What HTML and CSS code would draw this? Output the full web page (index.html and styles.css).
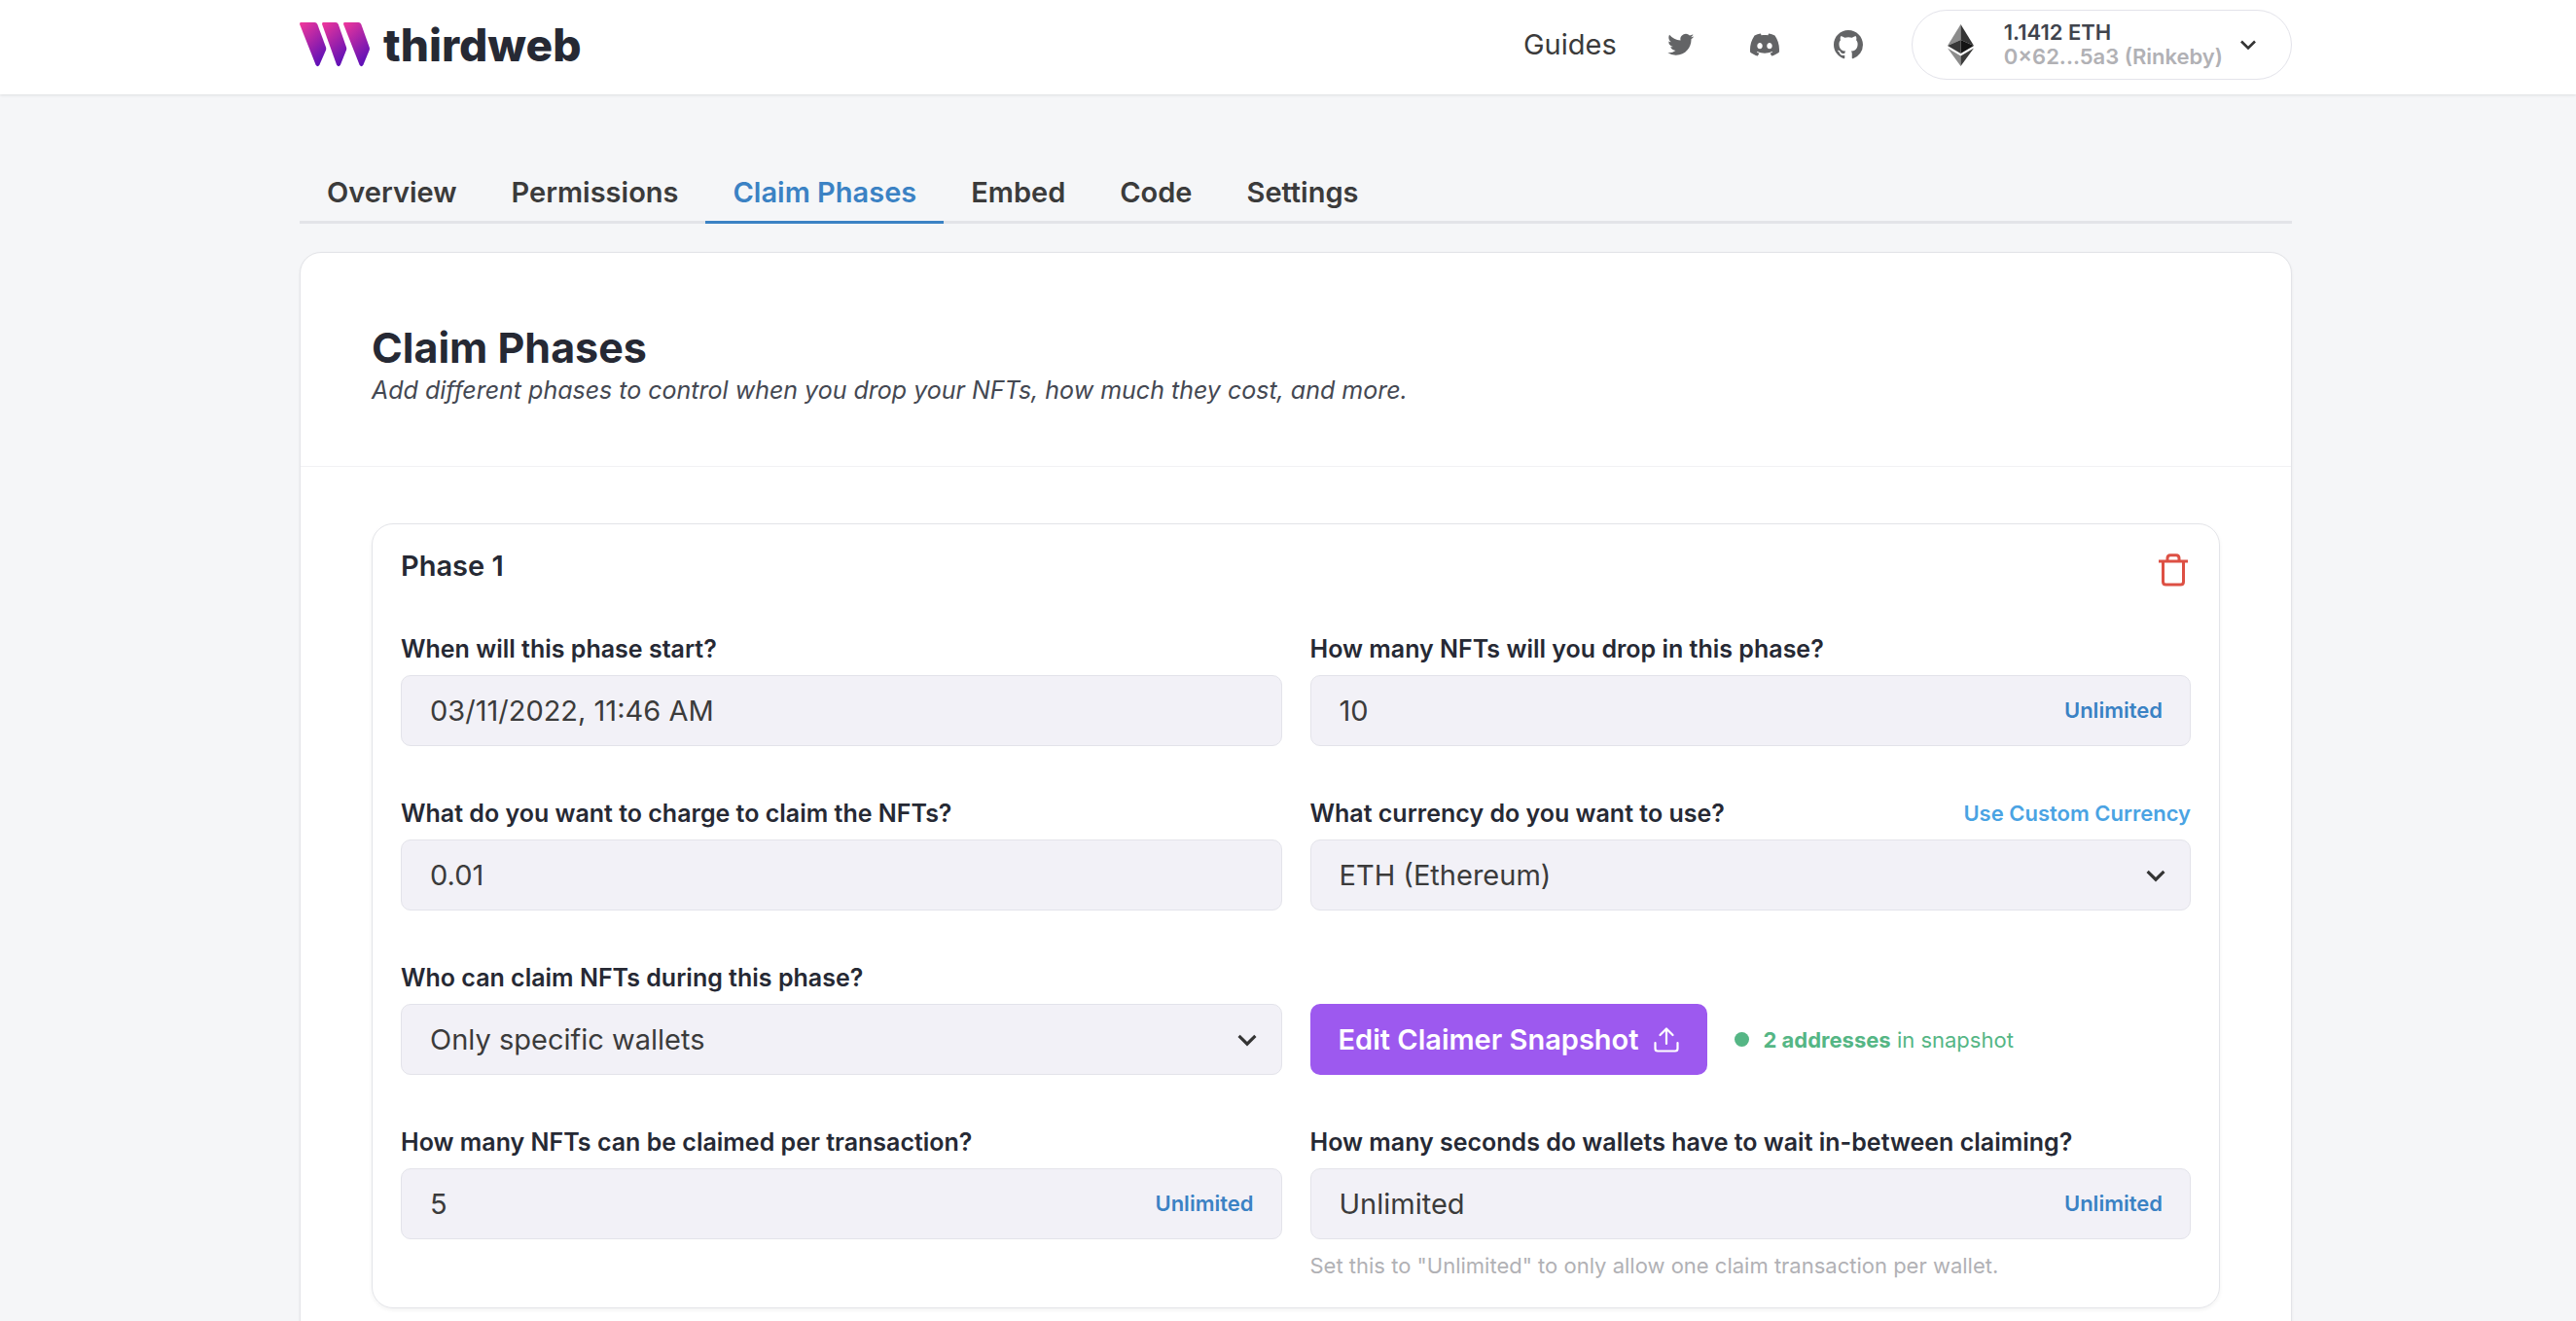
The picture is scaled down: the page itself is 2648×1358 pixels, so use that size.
FILE: index.html
```html
<!DOCTYPE html>
<html lang="en">
<head>
<meta charset="utf-8">
<meta name="viewport" content="width=device-width, initial-scale=1">
<title>thirdweb – Claim Phases</title>
<link rel="stylesheet" href="styles.css">
</head>
<body>
<svg class="sprite" aria-hidden="true">
  <symbol id="chevron" viewBox="0 0 20 20"><path d="M3 6.500 10 13.500 17 6.500" fill="none" stroke="currentColor" stroke-width="2.600"/></symbol>
</svg>

<header class="topbar">
  <a class="brand" href="#">
    <svg class="brand-mark" viewBox="0 0 72 46" aria-hidden="true">
      <defs>
        <linearGradient id="g1" gradientUnits="userSpaceOnUse" x1="2" y1="2" x2="32" y2="34"><stop offset="0" stop-color="#ea359c"/><stop offset="1" stop-color="#5a0fb8"/></linearGradient>
        <linearGradient id="g2" gradientUnits="userSpaceOnUse" x1="24" y1="2" x2="54" y2="34"><stop offset="0" stop-color="#ea359c"/><stop offset="1" stop-color="#5a0fb8"/></linearGradient>
        <linearGradient id="g3" gradientUnits="userSpaceOnUse" x1="46" y1="2" x2="76" y2="34"><stop offset="0" stop-color="#ea359c"/><stop offset="1" stop-color="#5a0fb8"/></linearGradient>
      </defs>
      <path fill="url(#g1)" d="M1.500 0H15.500Q17.500 0 18.300 2L27 25.500Q27.500 27 27 28.500L20.500 43.500Q18.500 47 16.500 43.500L.3 2.500Q-.5 0 1.500 0Z"/>
      <path fill="url(#g2)" d="M24.500 0H37Q39 0 39.800 2L48 25.500Q48.500 27 48 28.500L42 43.500Q40 47 38 43.500L23.300 2.500Q22.500 0 24.500 0Z"/>
      <path fill="url(#g3)" d="M46.500 0H60.500Q62.500 0 63.300 2L71.700 25.500Q72.200 27 71.700 28.500L65.500 43.500Q63.500 47 61.500 43.500L45.300 2.500Q44.500 0 46.500 0Z"/>
    </svg>
    <span class="brand-name">thirdweb</span>
  </a>
  <nav class="topnav">
    <a class="guides" href="#">Guides</a>
    <a class="social" href="#" aria-label="Twitter"><svg viewBox="0 0 24 24"><path transform="translate(1 1) scale(.9)" d="M23.953 4.570a10 10 0 01-2.825.775 4.958 4.958 0 002.163-2.723c-.951.555-2.005.959-3.127 1.184a4.920 4.920 0 00-8.384 4.482C7.690 8.095 4.067 6.130 1.640 3.162a4.822 4.822 0 00-.666 2.475c0 1.710.870 3.213 2.188 4.096a4.904 4.904 0 01-2.228-.616v.060a4.923 4.923 0 003.946 4.827 4.996 4.996 0 01-2.212.085 4.936 4.936 0 004.604 3.417 9.867 9.867 0 01-6.102 2.105c-.390 0-.779-.023-1.170-.067a13.995 13.995 0 007.557 2.209c9.053 0 13.998-7.496 13.998-13.985 0-.210 0-.420-.015-.630A9.935 9.935 0 0024 4.590z"/></svg></a>
    <a class="social" href="#" aria-label="Discord"><svg viewBox="0 0 24 24"><path d="M20.317 4.3698a19.7913 19.7913 0 00-4.8851-1.5152.0741.0741 0 00-.0785.0371c-.211.3753-.4447.8648-.6083 1.2495-1.8447-.2762-3.68-.2762-5.4868 0-.1636-.3933-.4058-.8742-.6177-1.2495a.077.077 0 00-.0785-.037 19.7363 19.7363 0 00-4.8852 1.515.0699.0699 0 00-.0321.0277C.5334 9.0458-.319 13.5799.0992 18.0578a.0824.0824 0 00.0312.0561c2.0528 1.5076 4.0413 2.4228 5.9929 3.0294a.0777.0777 0 00.0842-.0276c.4616-.6304.8731-1.2952 1.226-1.9942a.076.076 0 00-.0416-.1057c-.6528-.2476-1.2743-.5495-1.8722-.8923a.077.077 0 01-.0076-.1277c.1258-.0943.2517-.1923.3718-.2914a.0743.0743 0 01.0776-.0105c3.9278 1.7933 8.18 1.7933 12.0614 0a.0739.0739 0 01.0785.0095c.1202.099.246.1981.3728.2924a.077.077 0 01-.0066.1276 12.2986 12.2986 0 01-1.873.8914.0766.0766 0 00-.0407.1067c.3604.698.7719 1.3628 1.225 1.9932a.076.076 0 00.0842.0286c1.961-.6067 3.9495-1.5219 6.0023-3.0294a.077.077 0 00.0313-.0552c.5004-5.177-.8382-9.6739-3.5485-13.6604a.061.061 0 00-.0312-.0286zM8.02 15.3312c-1.1825 0-2.1569-1.0857-2.1569-2.419 0-1.3332.9555-2.4189 2.157-2.4189 1.2108 0 2.1757 1.0952 2.1568 2.419 0 1.3332-.9555 2.4189-2.1569 2.4189zm7.9748 0c-1.1825 0-2.1569-1.0857-2.1569-2.419 0-1.3332.9554-2.4189 2.1569-2.4189 1.2108 0 2.1757 1.0952 2.1568 2.419 0 1.3332-.946 2.4189-2.1568 2.4189Z"/></svg></a>
    <a class="social" href="#" aria-label="GitHub"><svg viewBox="0 0 16 16"><path d="M8 0C3.58 0 0 3.58 0 8c0 3.54 2.29 6.53 5.47 7.59.4.07.55-.17.55-.38 0-.19-.01-.82-.01-1.49-2.01.37-2.53-.49-2.69-.94-.09-.23-.48-.94-.82-1.13-.28-.15-.68-.52-.01-.53.63-.01 1.08.58 1.23.82.72 1.21 1.87.87 2.33.66.07-.52.28-.87.51-1.07-1.78-.2-3.64-.89-3.64-3.95 0-.87.31-1.59.82-2.15-.08-.2-.36-1.02.08-2.12 0 0 .67-.21 2.2.82.64-.18 1.32-.27 2-.27.68 0 1.36.09 2 .27 1.53-1.04 2.2-.82 2.2-.82.44 1.1.16 1.92.08 2.12.51.56.82 1.27.82 2.15 0 3.07-1.87 3.75-3.65 3.95.29.25.54.73.54 1.48 0 1.07-.01 1.93-.01 2.2 0 .21.15.46.55.38A8.013 8.013 0 0016 8c0-4.42-3.58-8-8-8z"/></svg></a>
    <button class="wallet" type="button">
      <svg class="eth" viewBox="0 0 27 43" aria-hidden="true">
        <path fill="#8c8c8c" d="M13.500 0 0 22 13.500 16Z"/><path fill="#343434" d="M13.500 0 27 22 13.500 16Z"/>
        <path fill="#393939" d="M13.500 16 0 22 13.500 30Z"/><path fill="#141414" d="M13.500 16 27 22 13.500 30Z"/>
        <path fill="#8c8c8c" d="M0 24.500 13.500 32.500V43Z"/><path fill="#3c3c3b" d="M27 24.500 13.500 32.500V43Z"/>
      </svg>
      <span class="wallet-text"><span class="balance">1.1412 ETH</span><span class="address">0×62...5a3 (Rinkeby)</span></span>
      <svg class="chevron" aria-hidden="true"><use href="#chevron"/></svg>
    </button>
  </nav>
</header>

<main class="page">
  <nav class="tabs">
    <a class="tab" href="#">Overview</a>
    <a class="tab" href="#">Permissions</a>
    <a class="tab tab-active" href="#" aria-current="page">Claim Phases</a>
    <a class="tab" href="#">Embed</a>
    <a class="tab" href="#">Code</a>
    <a class="tab" href="#">Settings</a>
  </nav>

  <section class="card">
    <div class="card-head">
      <h1>Claim Phases</h1>
      <p>Add different phases to control when you drop your NFTs, how much they cost, and more.</p>
    </div>
    <div class="card-body">
      <form class="phase">
        <div class="phase-head">
          <h2>Phase 1</h2>
          <button class="delete" type="button" aria-label="Delete phase">
            <svg viewBox="0 0 30 34" fill="none" stroke="currentColor" stroke-width="3" aria-hidden="true"><path d="M0 8H30M4.500 8V29Q4.500 32 7.500 32H22.500Q25.500 32 25.500 29V8M9 8V5Q9 1.700 12 1.700H18Q21 1.700 21 5V8"/></svg>
          </button>
        </div>
        <div class="fields">
          <div class="field">
            <div class="label-row"><label for="start">When will this phase start?</label></div>
            <div class="control"><input id="start" type="text" value="03/11/2022, 11:46 AM"></div>
          </div>
          <div class="field">
            <div class="label-row"><label for="supply">How many NFTs will you drop in this phase?</label></div>
            <div class="control"><input id="supply" type="text" value="10"><button class="unlimited" type="button">Unlimited</button></div>
          </div>
          <div class="field">
            <div class="label-row"><label for="price">What do you want to charge to claim the NFTs?</label></div>
            <div class="control"><input id="price" type="text" value="0.01"></div>
          </div>
          <div class="field">
            <div class="label-row"><label for="currency">What currency do you want to use?</label><button class="custom" type="button">Use Custom Currency</button></div>
            <div class="control"><select id="currency"><option>ETH (Ethereum)</option></select><svg class="chevron select-chevron" aria-hidden="true"><use href="#chevron"/></svg></div>
          </div>
          <div class="field">
            <div class="label-row"><label for="who">Who can claim NFTs during this phase?</label></div>
            <div class="control"><select id="who"><option>Only specific wallets</option></select><svg class="chevron select-chevron" aria-hidden="true"><use href="#chevron"/></svg></div>
          </div>
          <div class="snapshot">
            <button class="edit" type="button">Edit Claimer Snapshot
              <svg viewBox="0 0 26 26" fill="none" stroke="currentColor" stroke-width="2.200" stroke-linecap="round" stroke-linejoin="round" aria-hidden="true"><path d="M13 17V2M6.500 8 13 1.500 19.500 8M1.500 16V22Q1.500 24.500 4 24.500H22Q24.500 24.500 24.500 22V16"/></svg>
            </button>
            <p class="count"><span class="dot"></span><span><strong>2 addresses</strong> in snapshot</span></p>
          </div>
          <div class="field">
            <div class="label-row"><label for="limit">How many NFTs can be claimed per transaction?</label></div>
            <div class="control"><input id="limit" type="text" value="5"><button class="unlimited" type="button">Unlimited</button></div>
          </div>
          <div class="field">
            <div class="label-row"><label for="wait">How many seconds do wallets have to wait in-between claiming?</label></div>
            <div class="control"><input id="wait" type="text" value="Unlimited"><button class="unlimited" type="button">Unlimited</button></div>
            <p class="help">Set this to "Unlimited" to only allow one claim transaction per wallet.</p>
          </div>
        </div>
      </form>
    </div>
  </section>
</main>
</body>
</html>
```
FILE: styles.css
```css
* { box-sizing: border-box; }

body {
  margin: 0;
  background: #f5f6f8;
  color: #262934;
  font-family: Inter, "Liberation Sans", sans-serif;
  font-size: 29px;
  line-height: 44px;
}

html { overflow-x: hidden; }
h1, h2, p { margin: 0; }
a { color: inherit; text-decoration: none; }
button, input, select { font: inherit; color: inherit; margin: 0; }
button { border: 0; padding: 0; background: none; cursor: pointer; }
svg { display: block; flex: none; }
.sprite { position: absolute; width: 0; height: 0; }
.chevron { width: 20px; height: 20px; color: #343434; }

/* Top bar */
.topbar {
  display: flex;
  align-items: center;
  justify-content: space-between;
  height: 97px;
  padding: 0 292px 5px 308px;
  background: #fff;
  box-shadow: 0 1px 3px rgba(0, 0, 0, .1);
}
.brand { display: flex; align-items: center; gap: 14px; }
.brand-mark { width: 72px; height: 46px; }
.brand-name { font-size: 46px; font-weight: 800; line-height: 56px; }
.topnav { display: flex; align-items: center; }
.guides { margin-right: 51px; color: #3b3b3b; }
.social { margin-right: 56px; color: #636466; }
.social svg { width: 30px; height: 30px; fill: currentColor; }
.wallet {
  display: flex;
  align-items: center;
  height: 72px;
  margin-left: -6px;
  padding: 0 34px 0 36px;
  border: 1px solid #e3e3ea;
  border-radius: 36px;
  font-size: 22px;
  font-weight: 600;
  line-height: 25px;
  text-align: left;
}
.eth { width: 27px; height: 43px; margin-right: 31px; }
.wallet-text { display: flex; flex-direction: column; margin-right: 16px; }
.balance { color: #40444d; }
.address { color: #b1b1b5; }

/* Tabs */
.page { padding: 71px 292px 0 308px; }
.tabs { display: flex; border-bottom: 3px solid #e3e4e8; }
.tab {
  height: 62px;
  margin-bottom: -3px;
  padding: 8px 28px 0;
  border-bottom: 3px solid transparent;
  color: #3b3b3b;
  font-weight: 600;
}
.tab-active { color: #3b82c4; border-color: #3b82c4; }

/* Card */
.card {
  margin-top: 29px;
  border: 1px solid #e3e4e8;
  border-radius: 22px;
  background: #fff;
  box-shadow: 0 1px 3px rgba(0, 0, 0, .06);
}
.card-head { padding: 71px 73px 60px; border-bottom: 1px solid #f1f1f4; }
.card-head h1 { font-size: 43px; font-weight: 700; line-height: 52px; }
.card-head p { color: #444852; font-size: 25px; font-style: italic; line-height: 36px; }
.card-body { padding: 58px 73px; }

.phase {
  padding: 21px 29px 27px;
  border: 1px solid #e3e4e8;
  border-radius: 22px;
  box-shadow: 0 2px 4px rgba(0, 0, 0, .05);
}
.phase-head { display: flex; align-items: center; justify-content: space-between; margin-bottom: 45px; }
.phase-head h2 { font-size: 29px; font-weight: 600; }
.delete { padding: 8px 3px 0; color: #dd5044; }
.delete svg { width: 30px; height: 34px; }

.fields { display: grid; grid-template-columns: 1fr 1fr; gap: 51px 29px; align-items: start; }
.label-row { display: flex; justify-content: space-between; align-items: center; margin-bottom: 9px; line-height: 36px; }
label { font-size: 25px; font-weight: 600; }
.custom { color: #4aa3e3; font-size: 22px; font-weight: 600; }
.control { position: relative; }
.control input, .control select {
  display: block;
  width: 100%;
  height: 73px;
  padding: 0 29px;
  border: 1px solid #e3e3ea;
  border-radius: 10px;
  background: #f2f1f7;
  color: #3b3b3b;
  appearance: none;
}
.unlimited {
  position: absolute;
  top: 14px;
  right: 29px;
  color: #3b82c4;
  font-size: 22px;
  font-weight: 600;
}
.select-chevron { position: absolute; top: 25px; right: 24px; width: 24px; height: 24px; pointer-events: none; }
.help { margin-top: 11px; color: #b1b1b5; font-size: 22px; line-height: 32px; }

.snapshot { display: flex; align-items: center; gap: 28px; align-self: end; }
.edit {
  display: flex;
  align-items: center;
  gap: 15px;
  height: 73px;
  padding: 0 29px;
  border-radius: 10px;
  background: #9d59ef;
  color: #fff;
  font-weight: 600;
}
.edit svg { width: 26px; height: 26px; }
.count { display: flex; align-items: center; gap: 15px; color: #55b685; font-size: 22px; }
.dot { width: 15px; height: 15px; border-radius: 50%; background: currentColor; }
```
